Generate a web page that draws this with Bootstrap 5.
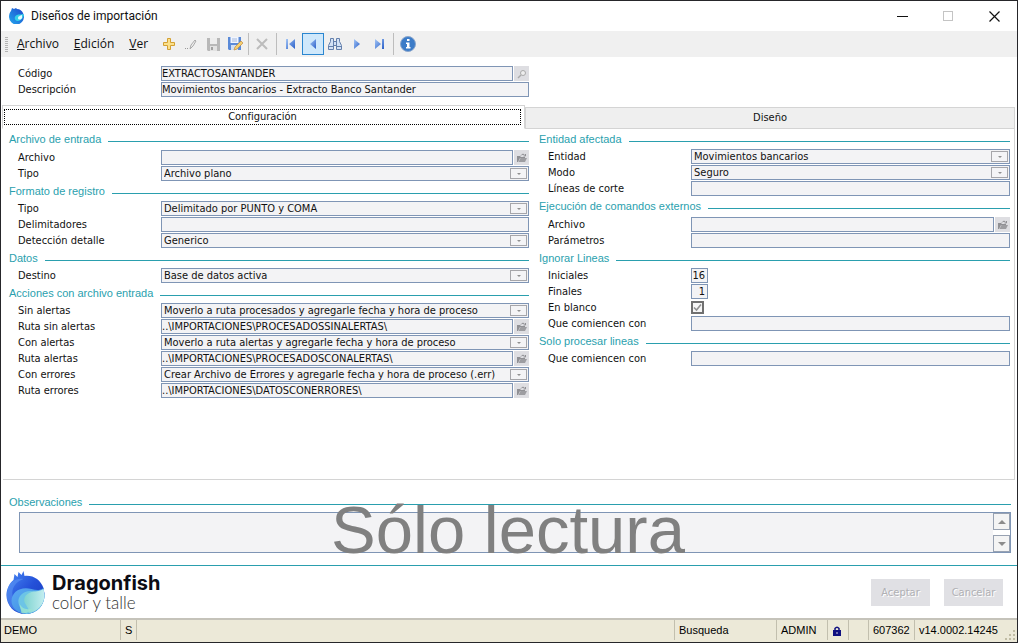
<!DOCTYPE html>
<html lang="es">
<head>
<meta charset="utf-8">
<meta name="viewport" content="width=device-width, initial-scale=1">
<title>Diseños de importación</title>
<link href="https://cdn.jsdelivr.net/npm/bootstrap@5.3.0/dist/css/bootstrap.min.css" rel="stylesheet">
<style>
  :root { --teal: #2a9fae; --edge: #7f95b5; --field: #f3f3f5; --ui: "DejaVu Sans Condensed", "Open Sans", sans-serif; --arial: "Liberation Sans", Arial, sans-serif; }
  body { font: 11px/15px var(--ui); color: #111; background: #fff; }
  .win { min-height: 100vh; border: 1px solid #26262a; }
  .titlebar { height: 30px; font: 12px/16px Roboto, sans-serif; padding-left: 8px; }
  .titlebar button { width: 46px; height: 30px; border: 0; background: none; padding: 0; }
  .after-logo { margin-left: 7px; }
  .tools { height: 26px; background: #f0f0f0; padding-left: 4px; font: 12px/16px "Open Sans", sans-serif; }
  .grip { width: 3px; height: 15px; background: repeating-linear-gradient(#b4b4b4 0 1px, #f0f0f0 1px 2px); margin-right: 9px; }
  .tools a { color: #111; text-decoration: none; margin-right: 15px; }
  .tools a.last { margin-right: 10px; }
  .tools u { text-underline-offset: 1px; }
  .tool { width: 22px; height: 22px; padding: 0; border: 1px solid transparent; background: none; }
  .tool.on { background: #cfe8fb; border-color: #2a86d0; }
  .tool svg { display: block; margin: auto; }
  .vline { width: 1px; height: 22px; background: #bdbdbd; margin: 0 2px; }
  .vline.wide { margin: 0 3px; }
  .cols { display: grid; grid-template-columns: 520fr 471fr; column-gap: 10px; padding: 0 7px 0 8px; }
  .head { padding-top: 9px; padding-bottom: 7px; }
  .line { display: flex; align-items: center; height: 15px; margin-bottom: 1px; padding-left: 9px; }
  .line > label { width: 143px; flex: none; }
  .fld { flex: 1; min-width: 0; height: 15px; border: 1px solid var(--edge); border-radius: 0; background-color: var(--field); color: #111; font: 11px/13px var(--ui); padding: 0; }
  select.fld { appearance: none; padding: 0 20px 0 2px; opacity: 1; background-repeat: no-repeat; background-position: right 1px center;
    background-image: url("data:image/svg+xml,%3Csvg xmlns='http://www.w3.org/2000/svg' width='17' height='11'%3E%3Crect x='.5' y='.5' width='16' height='10' fill='%23f4f4f6' stroke='%23a6a6aa'/%3E%3Cpath d='M7 5h4L9 7z' fill='%23909090'/%3E%3C/svg%3E"); }
  .num { flex: none; width: 17px; text-align: right; padding-right: 2px; }
  .pick { width: 15px; height: 15px; margin-left: 1px; border: 0; padding: 0; background: #dedee2; display: grid; place-items: center; }
  .chk { appearance: none; width: 13px; height: 13px; margin: 0; border: 2px solid #707070; background: #f6f6f6 url("data:image/svg+xml,%3Csvg xmlns='http://www.w3.org/2000/svg' width='9' height='9'%3E%3Cpath d='M1 4.5 3.5 7 8 1.5' fill='none' stroke='%23909090' stroke-width='1.6'/%3E%3C/svg%3E") center no-repeat; }
  .grp { margin: 0; }
  .cap { display: flex; gap: 7px; height: 19px; margin: 0; color: var(--teal); font: 11px/18px var(--arial); white-space: nowrap; }
  .cap::after { content: ""; flex: 1; height: 1px; margin-top: 11px; background: var(--teal); }
  .filefirst > .cap { height: 20px; }
  .tabstrip { display: grid; grid-template-columns: 523fr 490fr; padding: 0 2px 0 1px; align-items: end; }
  .tabstrip button { border: 1px solid #d4d4d4; background: #efefef; padding: 0; height: 22px; font: 11px/20px var(--ui); color: #111; }
  .tabstrip button.active { height: 24px; background: #fff; border-bottom-color: #fff; padding: 3px 3px 4px 1px; }
  .tabstrip .active span { display: block; outline: 1px dotted #000; outline-offset: -1px; line-height: 16px; }
  .pane { margin: 0 2px; border: solid #d4d4d4; border-width: 0 1px 1px 0; padding: 1px 4px 0 6px; min-height: 300px; }
  .obs { padding: 13px 6px 12px 8px; position: relative; }
  .memo { margin-left: 10px; border: 1px solid var(--edge); height: 41px; }
  .memo textarea { flex: 1; min-width: 0; resize: none; border: 0; background: var(--field); font: 11px/14px var(--ui); }
  .memo button { width: 17px; height: 17px; padding: 0; border: 1px solid #98a2b2; background: #f4f4f4; color: #888; display: grid; place-items: center; }
  .veil { position: absolute; inset: 22px 2px 12px 0; pointer-events: none; text-align: center; color: #808080; font: 67px/56px var(--arial); }
  .foot { border-top: 1px solid var(--teal); height: 53px; padding: 0 14px 0 5px; }
  .brand1 { font: 700 20px/22px Inter, sans-serif; color: #0c0c14; }
  .brand2 { font: 300 17px/18px Lato, sans-serif; color: #333; }
  .foot button { width: 59px; height: 27px; border: 0; background: #e0e0e4; color: #b0b0b4; text-shadow: 1px 1px #fff; font: 11px/15px var(--ui); }
  .foot .pair { gap: 14px; }
  .status { border-top: 2px solid #c5c3ba; background: #ece9d8; height: 24px; font: 11px/20px var(--arial); padding-left: 3px; color: #000; }
  .status span { height: 20px; line-height: 20px; border-left: 1px solid #c2bfae; padding-left: 4px; }
  .status span:first-child { border: 0; padding: 0; }
  .w-demo { width: 116px; } .w-s { width: 16px; } .w-find { width: 102px; } .w-user { width: 51px; }
  .w-lock { width: 21px; } .w-gap { width: 20px; } .w-serial { width: 46px; } .w-ver { width: 90px; }
</style>
</head>
<body>
<svg width="0" height="0" class="position-absolute" aria-hidden="true">
  <defs>
    <linearGradient id="g1" x1="0" y1="0" x2="1" y2="1"><stop offset="0" stop-color="#4a8bf5"/><stop offset=".5" stop-color="#2450d8"/><stop offset="1" stop-color="#183ab8"/></linearGradient>
    <linearGradient id="g2" x1="0" y1="0" x2="1" y2="1"><stop offset="0" stop-color="#5aa8f2"/><stop offset="1" stop-color="#3b8de0"/></linearGradient>
    <linearGradient id="g3" x1="0" y1="0" x2="1" y2="0"><stop offset="0" stop-color="#7fd3d0"/><stop offset="1" stop-color="#c4eef0"/></linearGradient>
    <linearGradient id="g4" x1="1" y1="0" x2="0" y2="1"><stop offset="0" stop-color="#1f46cc"/><stop offset="1" stop-color="#22a8ee"/></linearGradient>
    <symbol id="fish" viewBox="0 0 38 43">
      <path d="M7 9 8 3l3 3 1-5 3 3 2-4 1 5c9-1 16 4 19 12l1 6c0 11-8 20-19 20S0 35 0 24C0 18 3 12 7 9z" fill="url(#g1)"/>
      <path d="M1 19c2-8 8-12 16-11-8 3-12 9-11 16 1 8 5 14 10 18C7 41 0 33 0 24z" fill="#5c98f4" opacity=".55"/>
      <path d="M37 17c-4 3-8 2-12 1C14 15 5 21 5 30c0 6 5 11 12 13h4c10-1 17-9 17-19z" fill="url(#g2)"/>
      <path d="M37 18c-5 4-9 2-13 2-8 0-13 6-12 12 1 5 4 9 8 11 11-1 18-9 18-19z" fill="#6cc4e6"/>
      <path d="M37 18c-5 3-9 2-12 3-7 2-9 8-6 12 2 4 4 5 3 9 9-1 16-9 16-18z" fill="url(#g3)"/>
      <path d="M13 33c3 5 8 6 13 5-3 3-7 5-11 4z" fill="#9ee6cf" opacity=".8"/>
    </symbol>
    <symbol id="folder" viewBox="0 0 11 10"><path d="M1 9V3h3l1 1h4v1H4L2 9z" fill="#909094"/><path d="M4.500 5H11L9 9H2.500z" fill="#9d9da1"/><path d="M5 2.500C6 .8 8 .8 9 2.500M9.500 1v2H7.500" fill="none" stroke="#909094"/></symbol>
    <linearGradient id="bl" x1="0" y1="0" x2="1" y2="1"><stop offset="0" stop-color="#a4c6f6"/><stop offset="1" stop-color="#2a5fc8"/></linearGradient>
  </defs>
</svg>

<div class="win d-flex flex-column">
  <header class="titlebar d-flex align-items-center">
    <svg width="15" height="16" viewBox="0 0 15 16"><path d="M2 3 3 0l2 1 2-1 1 1c3 0 5 2 6 4l1 3a7 7.500 0 0 1-15 1C0 6 1 4 2 3z" fill="url(#g4)"/><path d="M14 6c-3 1-4 0-6 1-3 1-3 5 0 6 3 0 6-2 7-6z" fill="#35d0e8"/><path d="M13 7c-2 1-4 1-4 3s3 2 4 0z" fill="#e6fbff"/></svg>
    <span class="after-logo me-auto">Diseños de importación</span>
    <button type="button" aria-label="Minimizar"><svg width="11" height="11"><path d="M0 5.500h11" stroke="#111"/></svg></button>
    <button type="button" aria-label="Maximizar" disabled><svg width="11" height="11"><rect x=".5" y=".5" width="9" height="9" fill="none" stroke="#c4c4c4"/></svg></button>
    <button type="button" aria-label="Cerrar"><svg width="11" height="11"><path d="m.5.5 10 10m0-10-10 10" stroke="#111" stroke-width="1.200"/></svg></button>
  </header>

  <nav class="tools d-flex align-items-center" aria-label="Herramientas">
    <span class="grip"></span>
    <a href="#"><u>A</u>rchivo</a><a href="#"><u>E</u>dición</a><a href="#" class="last"><u>V</u>er</a>
    <button class="tool" type="button" aria-label="Nuevo"><svg width="14" height="14"><path d="M5.500 1.500h3v4h4v3h-4v4h-3v-4h-4v-3h4z" fill="#fbe08a" stroke="#d3a032"/></svg></button>
    <button class="tool" type="button" aria-label="Modificar" disabled><svg width="14" height="14"><path d="m6 12 1-4 4-5 1 1-3 5z" fill="#eee" stroke="#aaa"/><path d="M1 11.500h1m1 0h1" stroke="#999"/></svg></button>
    <button class="tool" type="button" aria-label="Guardar" disabled><svg width="15" height="15"><path d="M1 1h13v13H2l-1-1z" fill="#b8b8b8"/><path d="M4 1h7v6H4z" fill="#ededed"/><path d="M4 9h7v5H4z" fill="#e2e2e2"/><path d="M5 10h2v3H5z" fill="#a0a0a0"/></svg></button>
    <button class="tool" type="button" aria-label="Guardar como"><svg width="16" height="16"><path d="M1 1h13v13H2l-1-1z" fill="#5a8ad8"/><path d="M3.500 1h8v6h-8z" fill="#f0f5ff"/><path d="M5 3h5M5 5h5" stroke="#a4b8dc"/><path d="M4 9h7v5H4z" fill="#cfdef5"/><path d="m7 14 1-3 6-6 2 2-6 6z" fill="#f5cf70" stroke="#c08b40" stroke-width=".7"/></svg></button>
    <span class="vline"></span>
    <button class="tool" type="button" aria-label="Eliminar" disabled><svg width="14" height="14"><path d="m2 2 10 10M12 2 2 12" stroke="#bcbcbc" stroke-width="2"/></svg></button>
    <span class="vline wide"></span>
    <button class="tool" type="button" aria-label="Primero"><svg width="14" height="14"><path d="M2 2h2v10H2zM11 2v10L5 7z" fill="url(#bl)"/></svg></button>
    <button class="tool on" type="button" aria-label="Anterior"><svg width="14" height="14"><path d="M10 2v10L4 7z" fill="url(#bl)"/></svg></button>
    <button class="tool" type="button" aria-label="Buscar"><svg width="16" height="14"><path d="M3.500 1.500h3v3h3v-3h3v3l2 4v4h-5v-4h-3v4h-5v-4l2-4z" fill="#d4e2f5" stroke="#6480ac"/><path d="M6.500 4v5m3-5v5M2 9.500h4m4 0h4" stroke="#6480ac"/></svg></button>
    <button class="tool" type="button" aria-label="Siguiente"><svg width="14" height="14"><path d="M4 2v10l6-5z" fill="url(#bl)"/></svg></button>
    <button class="tool" type="button" aria-label="Último"><svg width="14" height="14"><path d="M10 2h2v10h-2zM3 2v10l6-5z" fill="url(#bl)"/></svg></button>
    <span class="vline wide"></span>
    <button class="tool" type="button" aria-label="Información"><svg width="16" height="16"><circle cx="8" cy="8" r="7.500" fill="#3c7cc8" stroke="#8aa6cc"/><path d="M7 3h2.500v2H7zM6 6.500h3.500V11h1v1.500H6V11h1V8H6z" fill="#fff"/></svg></button>
  </nav>

  <main class="flex-grow-1 d-flex flex-column">
    <div class="cols head"><div>
      <div class="line"><label for="cod">Código</label><input class="fld" id="cod" value="EXTRACTOSANTANDER" readonly><button class="pick" type="button" aria-label="Buscar código"><svg width="10" height="10"><circle cx="6" cy="4" r="2.500" fill="#eee" stroke="#aaa"/><path d="M4 6 1 9" stroke="#aaa" stroke-width="1.500"/></svg></button></div>
      <div class="line"><label for="des">Descripción</label><input class="fld" id="des" value="Movimientos bancarios - Extracto Banco Santander" readonly></div>
    </div></div>

    <div class="tabstrip" role="tablist">
      <button class="active" type="button" role="tab" aria-selected="true"><span>Configuración</span></button>
      <button type="button" role="tab" aria-selected="false">Diseño</button>
    </div>

    <div class="pane flex-grow-1" role="tabpanel">
      <div class="cols p-0">
        <div>
          <section class="grp filefirst"><h2 class="cap">Archivo de entrada</h2>
            <div class="line"><label for="a1">Archivo</label><input class="fld" id="a1" readonly><button class="pick" type="button" aria-label="Examinar"><svg width="11" height="10"><use href="#folder"/></svg></button></div>
            <div class="line"><label for="a2">Tipo</label><select class="fld" id="a2"><option>Archivo plano</option></select></div>
          </section>
          <section class="grp"><h2 class="cap">Formato de registro</h2>
            <div class="line"><label for="b1">Tipo</label><select class="fld" id="b1"><option>Delimitado por PUNTO y COMA</option></select></div>
            <div class="line"><label for="b2">Delimitadores</label><input class="fld" id="b2" readonly></div>
            <div class="line"><label for="b3">Detección detalle</label><select class="fld" id="b3"><option>Generico</option></select></div>
          </section>
          <section class="grp"><h2 class="cap">Datos</h2>
            <div class="line"><label for="c1">Destino</label><select class="fld" id="c1"><option>Base de datos activa</option></select></div>
          </section>
          <section class="grp"><h2 class="cap">Acciones con archivo entrada</h2>
            <div class="line"><label for="d1">Sin alertas</label><select class="fld" id="d1"><option>Moverlo a ruta procesados y agregarle fecha y hora de proceso</option></select></div>
            <div class="line"><label for="d2">Ruta sin alertas</label><input class="fld" id="d2" value="..\IMPORTACIONES\PROCESADOSSINALERTAS\" readonly><button class="pick" type="button" aria-label="Examinar"><svg width="11" height="10"><use href="#folder"/></svg></button></div>
            <div class="line"><label for="d3">Con alertas</label><select class="fld" id="d3"><option>Moverlo a ruta alertas y agregarle fecha y hora de proceso</option></select></div>
            <div class="line"><label for="d4">Ruta alertas</label><input class="fld" id="d4" value="..\IMPORTACIONES\PROCESADOSCONALERTAS\" readonly><button class="pick" type="button" aria-label="Examinar"><svg width="11" height="10"><use href="#folder"/></svg></button></div>
            <div class="line"><label for="d5">Con errores</label><select class="fld" id="d5"><option>Crear Archivo de Errores y agregarle fecha y hora de proceso (.err)</option></select></div>
            <div class="line"><label for="d6">Ruta errores</label><input class="fld" id="d6" value="..\IMPORTACIONES\DATOSCONERRORES\" readonly><button class="pick" type="button" aria-label="Examinar"><svg width="11" height="10"><use href="#folder"/></svg></button></div>
          </section>
        </div>
        <div>
          <section class="grp"><h2 class="cap">Entidad afectada</h2>
            <div class="line"><label for="e1">Entidad</label><select class="fld" id="e1"><option>Movimientos bancarios</option></select></div>
            <div class="line"><label for="e2">Modo</label><select class="fld" id="e2"><option>Seguro</option></select></div>
            <div class="line"><label for="e3">Líneas de corte</label><input class="fld" id="e3" readonly></div>
          </section>
          <section class="grp filefirst"><h2 class="cap">Ejecución de comandos externos</h2>
            <div class="line"><label for="f1">Archivo</label><input class="fld" id="f1" readonly><button class="pick" type="button" aria-label="Examinar"><svg width="11" height="10"><use href="#folder"/></svg></button></div>
            <div class="line"><label for="f2">Parámetros</label><input class="fld" id="f2" readonly></div>
          </section>
          <section class="grp"><h2 class="cap">Ignorar Lineas</h2>
            <div class="line"><label for="g-1">Iniciales</label><input class="fld num" id="g-1" value="16" readonly></div>
            <div class="line"><label for="g-2">Finales</label><input class="fld num" id="g-2" value="1" readonly></div>
            <div class="line"><label for="g-3">En blanco</label><input class="chk" type="checkbox" id="g-3" checked></div>
            <div class="line"><label for="g-4">Que comiencen con</label><input class="fld" id="g-4" readonly></div>
          </section>
          <section class="grp"><h2 class="cap">Solo procesar lineas</h2>
            <div class="line"><label for="h1">Que comiencen con</label><input class="fld" id="h1" readonly></div>
          </section>
        </div>
      </div>
    </div>

    <section class="obs">
      <label class="cap" for="obs">Observaciones</label>
      <div class="memo d-flex">
        <textarea id="obs" readonly></textarea>
        <div class="d-flex flex-column justify-content-between">
          <button type="button" aria-label="Subir"><svg width="8" height="4"><path d="M0 4h8L4 0z" fill="#8c8c8c"/></svg></button>
          <button type="button" aria-label="Bajar"><svg width="8" height="4"><path d="M0 0h8L4 4z" fill="#8c8c8c"/></svg></button>
        </div>
      </div>
      <div class="veil">Sólo lectura</div>
    </section>
  </main>

  <div class="foot d-flex align-items-center">
    <svg width="39" height="43"><use href="#fish"/></svg>
    <div class="after-logo me-auto"><div class="brand1">Dragonfish</div><div class="brand2">color y talle</div></div>
    <div class="pair d-flex">
      <button type="button" disabled>Aceptar</button>
      <button type="button" disabled>Cancelar</button>
    </div>
  </div>
  <footer class="status d-flex">
    <span class="w-demo">DEMO</span>
    <span class="w-s">S</span>
    <span class="flex-grow-1"></span>
    <span class="w-find">Busqueda</span>
    <span class="w-user">ADMIN</span>
    <span class="w-lock"><svg width="10" height="10"><rect x="1" y="4" width="8" height="6" fill="#101080"/><path d="M3 4V2.500Q5 0 7 2.500V4" fill="none" stroke="#101080" stroke-width="1.500"/><path d="M4.500 6h1v2h-1z" fill="#cfcfe0"/></svg></span>
    <span class="w-gap"></span>
    <span class="w-serial">607362</span>
    <span class="w-ver">v14.0002.14245</span>
    <svg class="align-self-end" width="13" height="13"><path d="M9 1h2v2H9zM5 5h2v2H5zM9 5h2v2H9zM1 9h2v2H1zM5 9h2v2H5zM9 9h2v2H9z" fill="#c0bca4"/></svg>
  </footer>
</div>
<script src="https://cdn.jsdelivr.net/npm/bootstrap@5.3.0/dist/js/bootstrap.bundle.min.js"></script>
</body>
</html>
